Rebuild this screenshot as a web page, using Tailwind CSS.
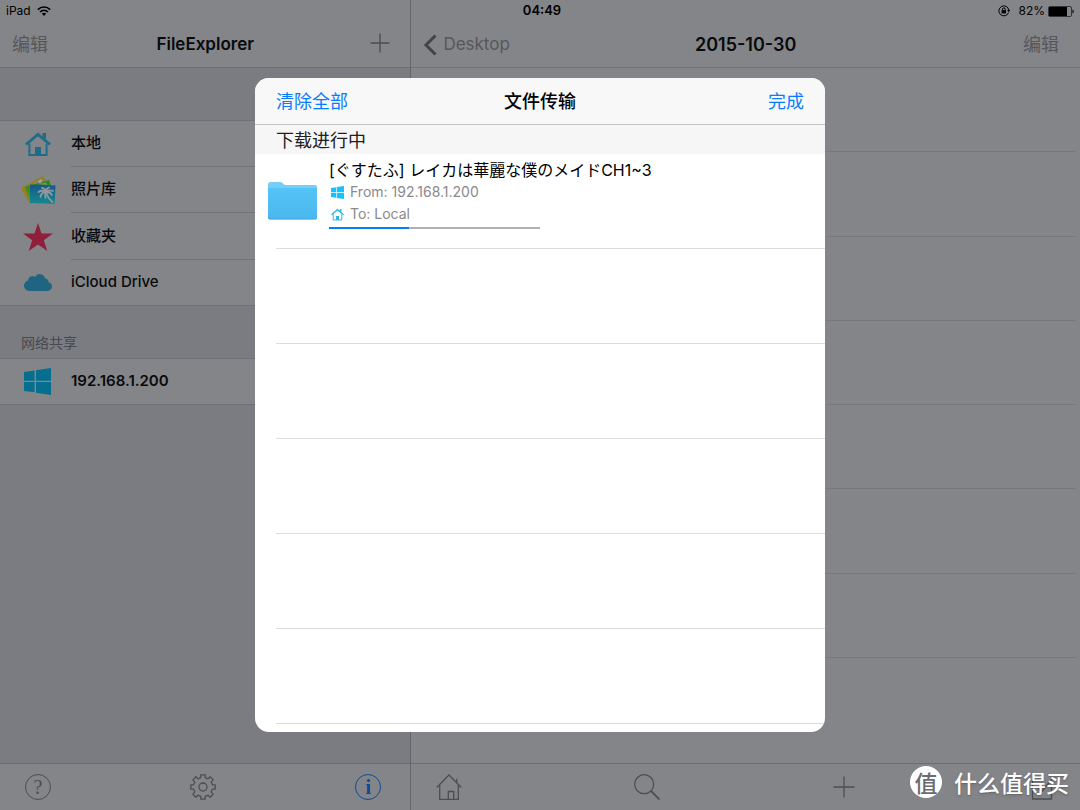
<!DOCTYPE html>
<html lang="zh-CN">
<head>
    <meta charset="UTF-8">
    <meta name="viewport" content="width=device-width, initial-scale=1.0">
    <title>FileExplorer</title>
    <script src="https://cdn.jsdelivr.net/npm/@tailwindcss/browser@4"></script>
</head>
<body class="relative flex min-h-screen bg-[#7b7c82] font-['Inter','Noto_Sans_CJK_SC',sans-serif] text-[#090a0c]">
    <!-- Shared icons -->
    <svg class="hidden">
        <symbol id="house" viewBox="0 0 26 24">
            <path d="M1 12.5 13 2.4l12 10.1" fill="none" stroke="currentColor" stroke-width="2.8"/>
            <path d="M17.6 1h3.4v6.5l-3.4-3z" fill="currentColor"/>
            <path d="M4.4 11.5v11.4h17.2V11.5" fill="none" stroke="currentColor" stroke-width="2"/>
            <path d="M10 15h6v8h-6z" fill="currentColor"/>
        </symbol>
        <symbol id="windows" viewBox="0 0 27 27">
            <path d="M0 4 10.6 2.5v10.2H0zM12 2.3 27 0v12.7H12zM0 14.1h10.6v10.2L0 22.9zM12 14.1h15V27l-15-2.3z" fill="currentColor"/>
        </symbol>
    </svg>

    <!-- Status bar -->
    <div class="absolute inset-x-0 top-0 grid h-[22px] grid-cols-[1fr_auto_1fr] items-center pr-1.5 pl-1.5 text-xs text-black">
        <div class="flex items-center gap-1.5">
            <span>iPad</span>
            <svg class="h-[10px] w-[14px]" viewBox="0 0 14 10" fill="none" stroke="currentColor" stroke-width="1.6">
                <path d="M.8 3.6c3.6-3.4 8.8-3.4 12.4 0M3 6c2.3-2.2 5.7-2.2 8 0"/>
                <path d="M4.8 7.6c1.3-1.2 3.1-1.2 4.4 0L7 9.9z" fill="currentColor" stroke="none"/>
            </svg>
        </div>
        <span class="pl-1 text-center text-[13px] font-semibold">04:49</span>
        <div class="flex items-center justify-end">
            <svg class="mr-2 size-[12px]" viewBox="0 0 12 12" fill="none" stroke="currentColor">
                <path d="M10.6 7.5A5 5 0 1 1 10.8 5"/>
                <path d="M9 5h3.2l-1.6 2z" fill="currentColor" stroke="none"/>
                <path d="M4.5 5.5V4.2a1.3 1.3 0 0 1 2.6 0v1.3"/>
                <path d="M3.6 5.2H8v3.2H3.6z" fill="currentColor" stroke="none"/>
            </svg>
            <span class="mr-[3px]">82%</span>
            <svg class="h-[11px] w-[26px]" viewBox="0 0 26 11">
                <rect x=".5" y=".5" width="23" height="10" rx="1.5" fill="none" stroke="#333437"/>
                <path d="M1 1h18v9H1z"/>
                <path d="M24.5 3.5c1.6.4 1.6 3.6 0 4z"/>
            </svg>
        </div>
    </div>

    <!-- Sidebar -->
    <aside class="flex w-[38%] flex-col">
        <header class="grid h-[68px] grid-cols-[1fr_auto_1fr] items-center border-b border-[#6f7074] bg-[#848589] px-3 pt-[22px]">
            <button class="justify-self-start text-lg text-[#56575a]">编辑</button>
            <h1 class="text-[17px] font-semibold">FileExplorer</h1>
            <button aria-label="添加" class="mr-2 justify-self-end pb-1 text-[#4d4e51]">
                <svg class="size-5" viewBox="0 0 20 20" stroke="currentColor" stroke-width="1.4"><path d="M10 .5v19M.5 10h19"/></svg>
            </button>
        </header>

        <ul class="mt-[52px] border-t border-[#707176] bg-[#848589] text-[15px] font-medium">
            <li class="flex h-[46px] items-center">
                <div class="flex w-[71px] pl-[25px] text-[#1f6c8a]"><svg class="h-6 w-[26px]"><use href="#house"/></svg></div>
                <a href="#" class="flex h-full flex-1 items-center border-b border-[#737478]">本地</a>
            </li>
            <li class="flex h-[46px] items-center">
                <div class="flex w-[71px] pl-[21px]">
                    <svg class="h-[30px] w-[35px]" viewBox="0 0 35 30">
                        <defs>
                            <linearGradient id="sea" x2="0" y2="1"><stop stop-color="#14578d"/><stop offset="1" stop-color="#158a8c"/></linearGradient>
                            <linearGradient id="leaf" x2="0" y2="1"><stop stop-color="#2d8712"/><stop offset="1" stop-color="#4a9a25"/></linearGradient>
                        </defs>
                        <path d="M0 13 22 1l4 7-14 19-3 2z" fill="#96801d"/>
                        <path d="m12 9 9-5.3 2.5 3.6z" fill="#858689"/>
                        <path d="m4 12 24-7 2 6-18 16-3-1z" fill="url(#leaf)"/>
                        <path d="m18 9 7-1.5 1 2.5z" fill="#858689"/>
                        <path d="m17 6 3-2 1 2-2 3z" fill="#a0a1a4"/>
                        <path d="m9 9.500 25.500 1-.8 18.500L9 28z" fill="url(#sea)"/>
                        <g fill="none" stroke="#8f989d" stroke-width="1.8" stroke-linecap="round">
                            <path d="M25 17c1 4 3 7 6.500 10M25 17c-3-2-6-1-7.500 0M25 17c-3 0-5 2-5.500 5M25 17c-1 2-1 4-.5 6M25 17c0-2-2-4-4-4M25 17c0-2 1-4 3-4.500M25 17c2-2 4-2 7-1M25 17c3 0 5 1 6 3"/>
                        </g>
                    </svg>
                </div>
                <a href="#" class="flex h-full flex-1 items-center border-b border-[#737478]">照片库</a>
            </li>
            <li class="flex h-[47px] items-center">
                <div class="flex w-[71px] pl-[23px]">
                    <svg class="h-7 w-[30px]" viewBox="0 0 30 28" fill="#8f1f3b"><path d="m15 0 3.500 10.600H30l-9.200 6.600L24.300 28 15 21.400 5.700 28l3.500-10.800L0 10.600h11.500z"/></svg>
                </div>
                <a href="#" class="flex h-full flex-1 items-center border-b border-[#737478]">收藏夹</a>
            </li>
            <li class="flex h-[46px] items-center border-b border-[#707176]">
                <div class="flex w-[71px] pl-6">
                    <svg class="h-[17px] w-7" viewBox="0 0 28 17" fill="#1f6480"><path d="M5.500 17C2.300 17 0 14.500 0 11.600 0 8.800 2 6.700 4.200 6.400 4 4 6 2 8.500 2.200 10 2.200 10.800 2.600 11.300 3 12 1.200 13.700 0 15.600 0c3 0 5 2.200 5.400 4.300 2 .2 3.600 1.800 3.600 4C26.500 8.700 28 10.500 28 12.600 28 15 26.200 17 23.700 17z"/></svg>
                </div>
                <a href="#" class="flex h-full flex-1 items-center">iCloud Drive</a>
            </li>
        </ul>

        <h2 class="flex h-[52px] items-end px-[21px] pb-[5px] text-sm text-[#48494d]">网络共享</h2>
        <ul class="border-y border-[#707176] bg-[#848589] text-[15px] font-semibold">
            <li class="flex h-[45px] items-center">
                <div class="flex w-[71px] pl-6 text-[#066f8f]"><svg class="size-[27px]"><use href="#windows"/></svg></div>
                <a href="#" class="flex h-full flex-1 items-center">192.168.1.200</a>
            </li>
        </ul>

        <footer class="mt-auto flex h-[47px] items-center justify-between border-t border-[#6b6c70] bg-[#848589] pr-[29px] pl-[25px] text-[#4d4e51]">
            <button aria-label="帮助" class="flex size-[26px] items-center justify-center rounded-full border border-current font-['Liberation_Serif',serif] text-xl">?</button>
            <button aria-label="设置">
                <svg class="size-[26px]" viewBox="0 0 26 26" fill="none" stroke="currentColor" stroke-width="1.300">
                    <path d="M10.800 3.600V.8h4.400v2.800l2.900 1.200 2-2 3.100 3.100-2 2 1.200 2.900h2.800v4.400h-2.800l-1.200 2.900 2 2-3.100 3.100-2-2-2.900 1.200v2.800h-4.400v-2.800l-2.900-1.200-2 2-3.100-3.100 2-2-1.200-2.900H.8v-4.400h2.800l1.200-2.900-2-2 3.100-3.100 2 2z" stroke-linejoin="round"/>
                    <circle cx="13" cy="13" r="4"/>
                </svg>
            </button>
            <button aria-label="信息" class="flex size-[26px] items-center justify-center rounded-full border border-current font-['Liberation_Serif',serif] text-xl font-bold text-[#0e4b94]">i</button>
        </footer>
    </aside>

    <!-- File list -->
    <main class="flex flex-1 flex-col border-l border-[#646569] bg-[#848589]">
        <header class="grid h-[68px] grid-cols-[1fr_auto_1fr] items-center border-b border-[#737478] px-3 pt-[22px]">
            <a href="#" class="flex items-center gap-1.5 text-[17px] text-[#56575a]">
                <svg class="h-[22px] w-[14px]" viewBox="0 0 14 22" fill="none" stroke="#434447" stroke-width="3"><path d="M12.500 1.500 3 11l9.500 9.500"/></svg>
                Desktop
            </a>
            <h1 class="text-lg font-semibold">2015-10-30</h1>
            <button class="mr-[9px] justify-self-end text-lg text-[#56575a]">编辑</button>
        </header>
        <ul class="mr-1 ml-4 flex flex-1 flex-col pb-[105px]">
            <li class="flex-1 border-b border-[#77787c]"></li>
            <li class="flex-1 border-b border-[#77787c]"></li>
            <li class="flex-1 border-b border-[#77787c]"></li>
            <li class="flex-1 border-b border-[#77787c]"></li>
            <li class="flex-1 border-b border-[#77787c]"></li>
            <li class="flex-1 border-b border-[#77787c]"></li>
            <li class="flex-1 border-b border-[#77787c]"></li>
        </ul>
        <footer class="flex h-[47px] items-center justify-between border-t border-[#6b6c70] px-[25px] text-[#4d4e51]">
            <button aria-label="主页">
                <svg class="size-[26px]" viewBox="0 0 26 26" fill="none" stroke="currentColor" stroke-width="1.300"><path d="M.7 13.500 13 1l12.300 12.500M3.700 10.800v14.500h18.600V10.800M20.800 8.500V4.800M12.300 25V17.500h5.400V25"/></svg>
            </button>
            <button aria-label="搜索">
                <svg class="size-[26px]" viewBox="0 0 26 26" fill="none" stroke="currentColor" stroke-width="1.300"><circle cx="10.200" cy="10.200" r="9.500"/><path d="m17 17 8.500 8.500" stroke-width="1.800"/></svg>
            </button>
            <button aria-label="新建">
                <svg class="size-[26px]" viewBox="0 0 26 26" stroke="currentColor" stroke-width="1.300"><path d="M13 2.500v21M2.500 13h21"/></svg>
            </button>
            <button aria-label="选择">
                <svg class="size-[26px]" viewBox="0 0 26 26" fill="none" stroke="currentColor" stroke-width="1.300"><path d="M14 6H3.500v19h19V13M8.500 13l4 5L23 5"/></svg>
            </button>
        </footer>
    </main>

    <!-- Transfer sheet -->
    <div class="absolute inset-0 flex items-center justify-center">
        <section role="dialog" aria-labelledby="sheet-title" class="w-full max-w-[570px] overflow-hidden rounded-[14px] bg-white pb-2 text-black">
            <header class="grid h-[47px] grid-cols-[1fr_auto_1fr] items-center border-b border-[#c4c4c6] bg-[#f8f8f8] px-[21px] pt-0.5 text-lg">
                <button class="justify-self-start text-[#087cff]">清除全部</button>
                <h1 id="sheet-title" class="font-medium">文件传输</h1>
                <button class="justify-self-end text-[#087cff]">完成</button>
            </header>
            <h2 class="flex h-[29px] items-center bg-[#f6f6f6] px-[21px] pt-0.5 text-lg text-[#202022]">下载进行中</h2>
            <ul>
                <li class="flex h-[94px]">
                    <svg class="mt-[28px] ml-[13px] h-[38px] w-[49px]" viewBox="0 0 49 38">
                        <defs><linearGradient id="folder" x2="0" y2="1"><stop stop-color="#55c3f5"/><stop offset="1" stop-color="#4ab8ee"/></linearGradient></defs>
                        <path d="M0 2.500C0 1 1 0 2.500 0H12c1.500 0 2 .5 3 1.500S17 3 18.500 3H47c1.300 0 2 .8 2 2v8H0z" fill="#76cdf5"/>
                        <path d="M0 6h49v29c0 1.500-1 2.300-2 2.300H2C.8 37.300 0 36.500 0 35z" fill="url(#folder)"/>
                        <path d="M0 34.500c0 1.500.8 2.500 2 2.500h45c1.200 0 2-1 2-2.500" fill="none" stroke="#3fa6dc"/>
                    </svg>
                    <div class="ml-3 flex flex-col pt-[5px]">
                        <h3 lang="ja" class="h-[22px] font-['Inter','Noto_Sans_CJK_JP',sans-serif] text-base leading-[22px] whitespace-nowrap">[ぐすたふ] レイカは華麗な僕のメイドCH1~3</h3>
                        <p class="flex h-[22px] items-center gap-1.5 pl-0.5 text-sm text-[#8a8a8c]">
                            <svg class="size-[13px] text-[#12c3ff]"><use href="#windows"/></svg>From: 192.168.1.200
                        </p>
                        <p class="flex h-[22px] items-center gap-1.5 pl-0.5 text-sm text-[#8a8a8c]">
                            <svg class="size-[13px] text-[#28b8e0]"><use href="#house"/></svg>To: Local
                        </p>
                        <div role="progressbar" aria-label="下载进度" aria-valuenow="38" class="mt-0.5 h-0.5 w-[211px] bg-[#b0b0b2]">
                            <div class="h-full bg-[#087cff]" style="width: 38%"></div>
                        </div>
                    </div>
                </li>
                <li class="ml-[21px] h-[95px] border-t border-[#dcdcde]"></li>
                <li class="ml-[21px] h-[95px] border-t border-[#dcdcde]"></li>
                <li class="ml-[21px] h-[95px] border-t border-[#dcdcde]"></li>
                <li class="ml-[21px] h-[95px] border-t border-[#dcdcde]"></li>
                <li class="ml-[21px] h-[96px] border-y border-[#dcdcde]"></li>
            </ul>
        </section>
    </div>

    <!-- Watermark -->
    <div class="absolute right-[11px] bottom-3 flex items-center gap-3 font-['Noto_Sans_CJK_SC',sans-serif] text-white">
        <span class="flex size-8 items-center justify-center rounded-full bg-white text-[23px] leading-none font-medium text-[#6b6c6f]">值</span>
        <span class="text-[23px] leading-[30px] font-medium text-shadow-md">什么值得买</span>
    </div>
</body>
</html>
